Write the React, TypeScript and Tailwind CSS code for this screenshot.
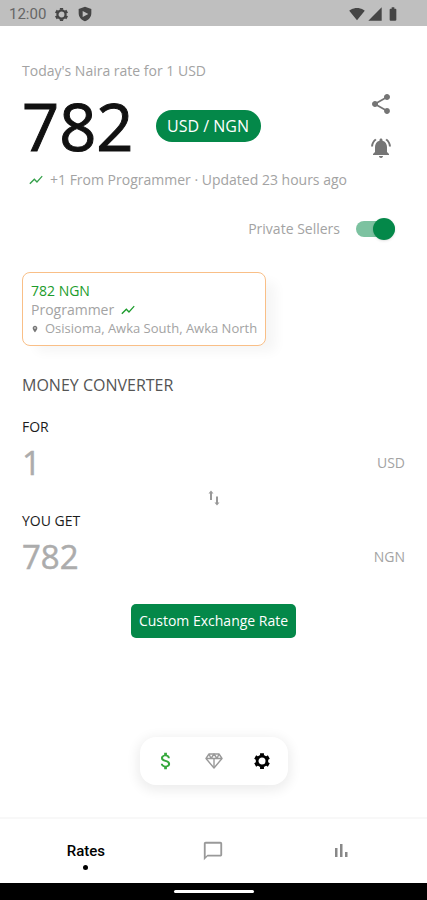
import { useState } from "react";
import type { ReactNode } from "react";
import {
  MdAttachMoney,
  MdBatteryFull,
  MdChatBubbleOutline,
  MdLocationOn,
  MdNotificationsActive,
  MdShare,
  MdShowChart,
  MdSignalCellular4Bar,
  MdSignalWifi4Bar,
} from "react-icons/md";

function GearIcon({ className }: { className: string }) {
  return (
    <svg viewBox="0 0 24 24" className={className} fill="none" stroke="currentColor" aria-hidden="true">
      <circle cx="12" cy="12" r="6.5" strokeWidth="3.6" />
      <path
        strokeWidth="5.2"
        d="M12 1.500v3M12 19.500v3M21.100 6.750l-2.600 1.500M5.500 15.750 2.900 17.250M21.100 17.250l-2.600-1.500M5.500 8.250 2.900 6.750"
      />
    </svg>
  );
}

function ShieldIcon() {
  return (
    <svg viewBox="0 0 24 24" className="size-4" fill="currentColor" aria-hidden="true">
      <path
        fillRule="evenodd"
        d="M12 1 2.500 4.500v6.500c0 5.500 4 10.400 9.500 12 5.500-1.600 9.500-6.500 9.500-12V4.500L12 1ZM8.500 7.500l8.500 4.500-8.500 4.500v-9Z"
      />
    </svg>
  );
}

function SwapIcon() {
  return (
    <svg viewBox="0 0 14 18" className="h-[18px] w-[14px]" fill="currentColor" aria-hidden="true">
      <path d="M4 1.500 6.500 4.500H5V11H3V4.500H1.500L4 1.500Z" />
      <path d="M10 16.500 7.500 13.500H9V7.500h2v6h1.500L10 16.500Z" />
    </svg>
  );
}

function GemIcon() {
  return (
    <svg
      viewBox="0 0 20 20"
      className="size-5"
      fill="none"
      stroke="currentColor"
      strokeWidth="1.4"
      strokeLinejoin="round"
      aria-hidden="true"
    >
      <path d="M5 3h10l3 4.500L10 17 2 7.500 5 3Z" />
      <path d="M2 7.500h16M10 17V7.500M5 3l2 4.500L10 3l3 4.500L15 3" />
    </svg>
  );
}

function BarsIcon() {
  return (
    <svg viewBox="0 0 16 16" className="size-4" fill="currentColor" aria-hidden="true">
      <path d="M2 5h2.500v9H2zM7 1h2.500v13H7zM12 9h2.500v5H12z" />
    </svg>
  );
}

function StatusBar() {
  return (
    <div className="flex h-[26px] items-center justify-between bg-[#bfbfbf] pt-0.5 pr-[26px] pl-[9px] text-[#454545]">
      <div className="flex items-center gap-2">
        <span className="w-[37px] font-['Roboto',sans-serif] text-[15px] leading-5 text-[#666]">
          12:00
        </span>
        <GearIcon className="size-[15px]" />
        <ShieldIcon />
      </div>
      <div className="flex items-center gap-0.5">
        <MdSignalWifi4Bar className="size-4" />
        <MdSignalCellular4Bar className="size-4" />
        <MdBatteryFull className="size-4" />
      </div>
    </div>
  );
}

type AmountProps = {
  id: string;
  label: string;
  value: string;
  currency: string;
  onChange: (value: string) => void;
};

function Amount({ id, label, value, currency, onChange }: AmountProps) {
  return (
    <div>
      <label htmlFor={id} className="block text-[14px] leading-5 text-[#1c1c1c]">
        {label}
      </label>
      <div className="mt-1 flex items-center">
        <input
          id={id}
          value={value}
          inputMode="decimal"
          onChange={(event) => onChange(event.target.value)}
          className="h-11 min-w-0 flex-1 bg-transparent text-[33px] leading-[44px] text-[#acacac] outline-none [-webkit-text-stroke:0.5px_#acacac]"
        />
        <span className="text-[14px] leading-5 text-[#a3a3a3]">{currency}</span>
      </div>
    </div>
  );
}

function DockButton({ label, className, children }: { label: string; className: string; children: ReactNode }) {
  return (
    <button type="button" aria-label={label} className={`flex w-12 items-center justify-center ${className}`}>
      {children}
    </button>
  );
}

export default function App() {
  const [amount, setAmount] = useState("1");
  const [result, setResult] = useState("782");
  const [privateSellers, setPrivateSellers] = useState(true);

  return (
    <div className="flex min-h-screen flex-col bg-white font-['Open_Sans','Noto_Sans',sans-serif]">
      <StatusBar />
      <main className="flex flex-1 flex-col px-[22px] pt-[35px]">
        <header className="flex justify-between">
          <div>
            <p className="text-[14px] leading-5 text-[#a3a3a3]">Today's Naira rate for 1 USD</p>
            <div className="mt-[9px] flex h-[72px] items-center gap-[22px]">
              <h1 className="text-[65px] leading-[72px] text-[#111] [-webkit-text-stroke:1px_#111]">782</h1>
              <button
                type="button"
                className="h-8 w-[105px] rounded-full bg-[#048849] text-[16px] leading-5 text-white"
              >
                USD / NGN
              </button>
            </div>
          </div>
          <div className="flex flex-col gap-5 pt-[31px] pr-3 text-[#757575]">
            <button type="button" aria-label="Share">
              <MdShare className="size-6" />
            </button>
            <button type="button" aria-label="Rate alerts">
              <MdNotificationsActive className="size-6" />
            </button>
          </div>
        </header>

        <p className="mt-2 flex items-center gap-1.5 pl-1.5 text-[14px] leading-5 text-[#a3a3a3]">
          <MdShowChart className="size-4 text-[#35a04a]" />
          +1 From Programmer · Updated 23 hours ago
        </p>

        <label className="mt-7 flex items-center justify-end gap-4 pr-2.5 text-[14px] leading-5 text-[#a3a3a3]">
          Private Sellers
          <span className="relative flex h-[22px] w-[39px] items-center">
            <input
              type="checkbox"
              role="switch"
              checked={privateSellers}
              onChange={(event) => setPrivateSellers(event.target.checked)}
              className="peer h-4 w-full appearance-none rounded-full bg-[#bbb] checked:bg-[#7cc2a0]"
            />
            <span className="pointer-events-none absolute left-0 size-[22px] rounded-full bg-[#eee] shadow peer-checked:right-0 peer-checked:left-auto peer-checked:bg-[#048849]" />
          </span>
        </label>

        <section className="mt-8 self-start rounded-lg border border-[#f9bf87] bg-white px-2 pt-2 pb-[7px] shadow-[12px_8px_12px_-2px_rgba(0,0,0,0.04)]">
          <p className="text-[14px] leading-[19px] text-[#1c9c2c]">782 NGN</p>
          <p className="flex items-center gap-1.5 text-[14px] leading-[19px] text-[#a3a3a3]">
            Programmer
            <MdShowChart className="size-4 text-[#1c9c2c]" />
          </p>
          <p className="flex items-center gap-1.5 text-[13px] leading-[19px] text-[#a3a3a3]">
            <MdLocationOn className="size-2 text-[#777]" />
            Osisioma, Awka South, Awka North
          </p>
        </section>

        <h2 className="mt-[27px] mb-5 text-[16px] leading-6 text-[#555]">MONEY CONVERTER</h2>
        <Amount id="amount-for" label="FOR" value={amount} currency="USD" onChange={setAmount} />
        <button type="button" aria-label="Swap currencies" className="my-1 self-center text-[#999]">
          <SwapIcon />
        </button>
        <Amount id="amount-get" label="YOU GET" value={result} currency="NGN" onChange={setResult} />

        <button
          type="button"
          className="mt-[25px] h-[34px] self-center rounded-[5px] bg-[#048849] px-2 text-[14px] leading-5 text-white"
        >
          Custom Exchange Rate
        </button>

        <div className="mt-auto mb-8 flex h-12 self-center rounded-2xl bg-white px-0.5 shadow-[0_3px_12px_3px_rgba(0,0,0,0.07)]">
          <DockButton label="Currency" className="text-[#35a83c]">
            <MdAttachMoney className="size-[22px]" />
          </DockButton>
          <DockButton label="Premium" className="text-[#999]">
            <GemIcon />
          </DockButton>
          <DockButton label="Settings" className="text-black">
            <GearIcon className="size-[18px]" />
          </DockButton>
        </div>
      </main>

      <nav className="grid h-[66px] grid-cols-3 border-t-2 border-[#f8f8f8] bg-white px-[22px]">
        <a href="#rates" className="flex flex-col items-center pt-[22px] text-black">
          <span className="font-['Roboto',sans-serif] text-[15px] leading-5 font-medium">Rates</span>
          <span className="mt-1 size-[5px] rounded-full bg-black" />
        </a>
        <a href="#chat" aria-label="Messages" className="flex items-center justify-center text-[#999]">
          <MdChatBubbleOutline className="size-[22px]" />
        </a>
        <a href="#charts" aria-label="Charts" className="flex items-center justify-center text-[#888]">
          <BarsIcon />
        </a>
      </nav>
      <div className="flex h-[17px] items-center justify-center bg-black">
        <span className="h-[3px] w-20 rounded-full bg-white" />
      </div>
    </div>
  );
}
